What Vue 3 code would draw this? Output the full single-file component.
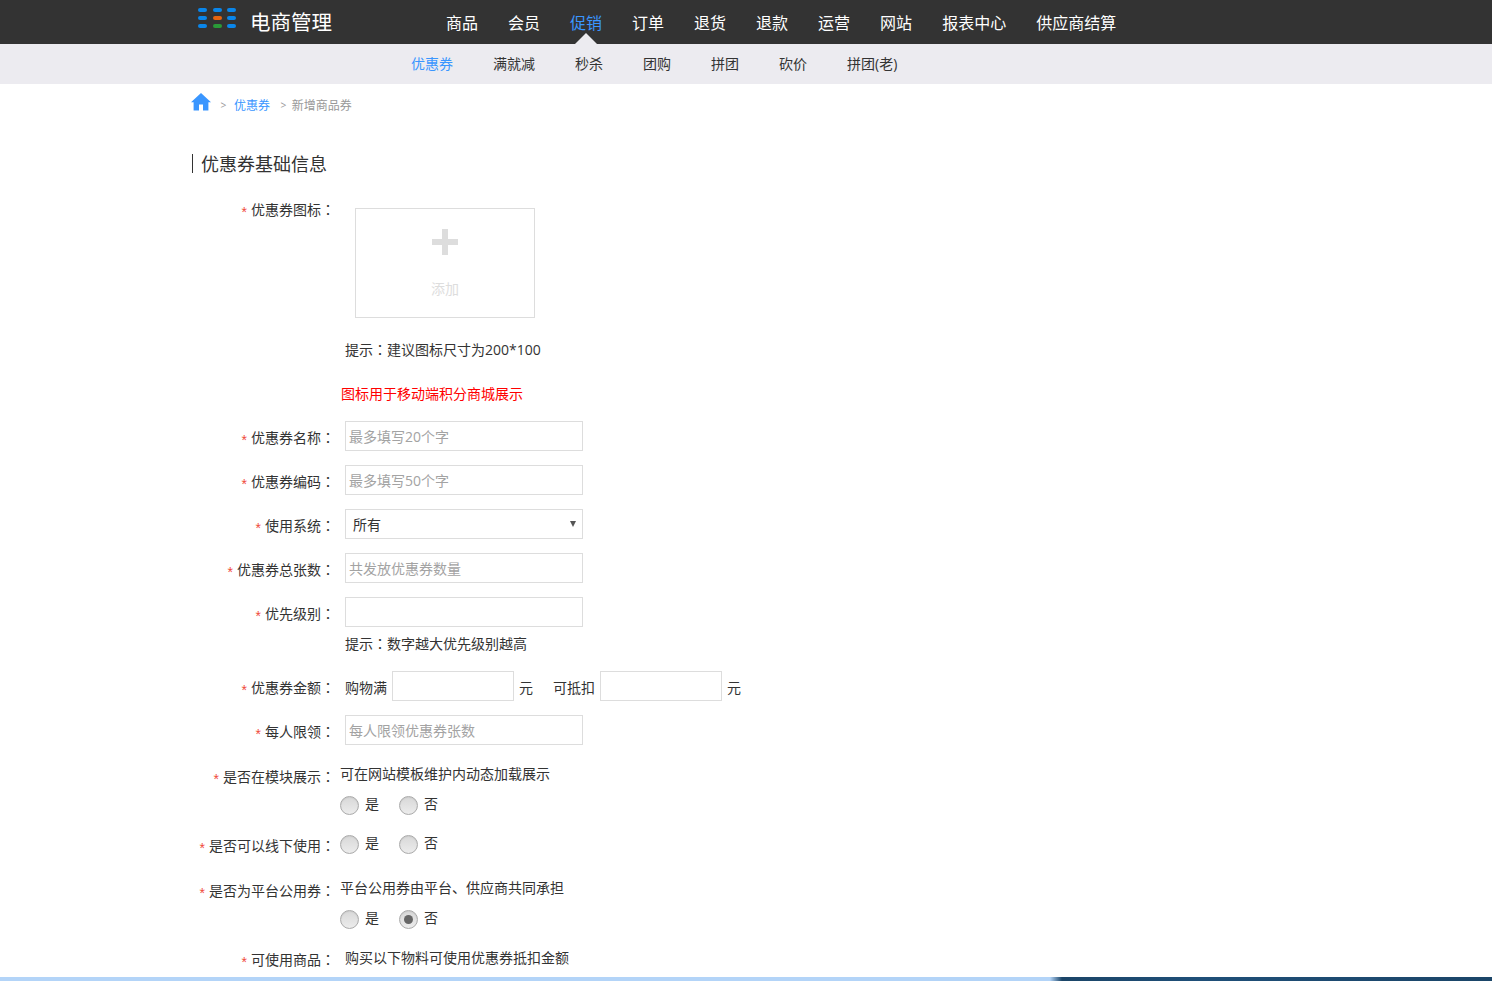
<template>
  <div class="page">
    <div class="top-bar">
      <div class="logo">
        <div class="logo-grid">
          <i v-for="(c, i) in logoCells" :key="i" :class="c"></i>
        </div>
        <span class="logo-text">电商管理</span>
      </div>
      <ul class="main-nav">
        <li v-for="item in mainNav" :key="item" :class="{ active: item === '促销' }">{{ item }}</li>
      </ul>
    </div>

    <ul class="sub-nav">
      <li v-for="item in subNav" :key="item" :class="{ active: item === '优惠券' }">{{ item }}</li>
    </ul>

    <div class="content">
      <div class="crumbs">
        <svg class="home" viewBox="0 0 20 18" width="20" height="18">
          <path d="M10 0 L20 9.2 L17.4 9.2 L17.4 17.5 L12 17.5 L12 11.5 L8 11.5 L8 17.5 L2.6 17.5 L2.6 9.2 L0 9.2 Z" fill="#3a96ff" />
        </svg>
        <span class="sep first">&gt;</span>
        <span class="link">优惠券</span>
        <span class="sep">&gt;</span>
        <span class="current">新增商品券</span>
      </div>

      <h2 class="title">优惠券基础信息</h2>

      <div class="row icon-row">
        <label class="label"><em>*</em>优惠券图标<span class="colon">：</span></label>
        <div class="upload">
          <span class="plus"></span>
          <span class="add">添加</span>
        </div>
      </div>
      <p class="size-hint">提示<span class="colon">：</span>建议图标尺寸为200*100</p>
      <p class="red-hint">图标用于移动端积分商城展示</p>

      <div class="row">
        <label class="label"><em>*</em>优惠券名称<span class="colon">：</span></label>
        <input class="field" placeholder="最多填写20个字" />
      </div>
      <div class="row">
        <label class="label"><em>*</em>优惠券编码<span class="colon">：</span></label>
        <input class="field" placeholder="最多填写50个字" />
      </div>
      <div class="row">
        <label class="label"><em>*</em>使用系统<span class="colon">：</span></label>
        <div class="field select">所有<span class="caret"></span></div>
      </div>
      <div class="row">
        <label class="label"><em>*</em>优惠券总张数<span class="colon">：</span></label>
        <input class="field" placeholder="共发放优惠券数量" />
      </div>
      <div class="row priority">
        <label class="label"><em>*</em>优先级别<span class="colon">：</span></label>
        <input class="field" />
      </div>
      <p class="priority-hint">提示<span class="colon">：</span>数字越大优先级别越高</p>
      <div class="row">
        <label class="label"><em>*</em>优惠券金额<span class="colon">：</span></label>
        <div class="amount">
          <span class="buy">购物满</span>
          <input class="field short" />
          <span class="yuan">元</span>
          <span class="deduct">可抵扣</span>
          <input class="field short" />
          <span class="yuan">元</span>
        </div>
      </div>
      <div class="row limit">
        <label class="label"><em>*</em>每人限领<span class="colon">：</span></label>
        <input class="field" placeholder="每人限领优惠券张数" />
      </div>

      <div class="row choice module">
        <label class="label"><em>*</em>是否在模块展示<span class="colon">：</span></label>
        <div class="choice-body">
          <p class="note">可在网站模板维护内动态加载展示</p>
          <div class="radios">
            <span class="radio"></span><span class="radio-text">是</span>
            <span class="radio"></span><span class="radio-text">否</span>
          </div>
        </div>
      </div>
      <div class="row choice offline">
        <label class="label"><em>*</em>是否可以线下使用<span class="colon">：</span></label>
        <div class="radios">
          <span class="radio"></span><span class="radio-text">是</span>
          <span class="radio"></span><span class="radio-text">否</span>
        </div>
      </div>
      <div class="row choice public">
        <label class="label"><em>*</em>是否为平台公用券<span class="colon">：</span></label>
        <div class="choice-body">
          <p class="note">平台公用券由平台、供应商共同承担</p>
          <div class="radios">
            <span class="radio"></span><span class="radio-text">是</span>
            <span class="radio checked"></span><span class="radio-text">否</span>
          </div>
        </div>
      </div>
      <div class="row goods">
        <label class="label"><em>*</em>可使用商品<span class="colon">：</span></label>
        <p class="note">购买以下物料可使用优惠券抵扣金额</p>
      </div>
    </div>

    <div class="bottom-bar"></div>
  </div>
</template>

<script setup>
const logoCells = ['', '', '', '', 'orange', '', '', 'green', '']
const mainNav = ['商品', '会员', '促销', '订单', '退货', '退款', '运营', '网站', '报表中心', '供应商结算']
const subNav = ['优惠券', '满就减', '秒杀', '团购', '拼团', '砍价', '拼团(老)']
</script>

<style>
html,
body {
  margin: 0;
  background: #fff;
}
</style>

<style scoped>
.page {
  height: 981px;
  display: flex;
  flex-direction: column;
  overflow: hidden;
  font-family: "Open Sans", "Noto Sans CJK SC", sans-serif;
  font-size: 14px;
  color: #333;
}

/* the SC font pushes full-width colons to the left, TC centres them */
.colon {
  font-family: "Noto Sans CJK TC", sans-serif;
}

.top-bar {
  height: 44px;
  flex: none;
  background: #333;
  display: flex;
}

.logo {
  width: 446px;
  flex: none;
  display: flex;
  align-items: flex-start;
  box-sizing: border-box;
  padding: 8px 0 0 198px;
}

.logo-grid {
  display: grid;
  grid-template-columns: repeat(3, 9px);
  grid-auto-rows: 4px;
  gap: 4px 5.5px;
}

.logo-grid i {
  background: #0a86ea;
  border-radius: 2px;
}

.logo-grid .orange {
  background: #e8640f;
}

.logo-grid .green {
  background: #2a9a38;
}

.logo-text {
  margin: -1px 0 0 14px;
  font-size: 20.5px;
  line-height: 30px;
  color: #fff;
}

.main-nav,
.sub-nav {
  list-style: none;
  margin: 0;
  padding: 0;
  display: flex;
}

.main-nav {
  gap: 30px;
}

.main-nav li {
  position: relative;
  height: 44px;
  font-size: 16px;
  line-height: 46px;
  color: #fff;
}

.main-nav li.active {
  color: #3a96ff;
}

.main-nav li.active::after {
  content: "";
  position: absolute;
  left: 50%;
  bottom: 0;
  margin-left: -11px;
  border: 11px solid transparent;
  border-top: 0;
  border-bottom-color: #ecebf0;
}

.sub-nav {
  height: 40px;
  flex: none;
  background: #ecebf0;
  gap: 40px;
  padding-left: 411px;
}

.sub-nav li {
  line-height: 40px;
  color: #333;
}

.sub-nav li.active {
  color: #3a96ff;
}

.content {
  flex: 1;
  min-height: 0;
  padding-left: 191px;
}

.crumbs {
  height: 18px;
  margin-top: 9px;
  display: flex;
  align-items: flex-start;
  font-size: 12px;
  line-height: 17px;
  color: #999;
}

.crumbs span {
  padding-top: 4px;
}

.sep {
  margin: 0 5px 0 10px;
  transform: scale(0.85);
}

.sep.first {
  margin-left: 9px;
  margin-right: 7px;
}

.link {
  color: #3a96ff;
}

.title {
  margin: 0;
  margin-top: 39px;
  padding-left: 10px;
  height: 27px;
  line-height: 29px;
  font-size: 18px;
  font-weight: 400;
  color: #333;
  position: relative;
}

.title::before {
  content: "";
  position: absolute;
  left: 1px;
  top: 4px;
  width: 1px;
  height: 19px;
  background: #333;
}

.row {
  display: flex;
  align-items: flex-start;
  margin-bottom: 14px;
}

.label {
  width: 144px;
  margin-right: 10px;
  flex: none;
  text-align: right;
  line-height: 20px;
  padding-top: 6px;
  height: 24px;
  white-space: nowrap;
}

.label em {
  font-family: "Liberation Sans", sans-serif;
  font-style: normal;
  color: #f04a3a;
  margin-right: 4px;
  font-size: 14px;
  vertical-align: -2px;
}

.icon-row {
  margin: 31px 0 0;
}

.icon-row .label {
  padding-top: 0;
  margin-top: -9px;
}

.upload {
  width: 178px;
  height: 108px;
  margin-left: 10px;
  border: 1px solid #ddd;
  display: flex;
  flex-direction: column;
  align-items: center;
}

.plus {
  display: block;
  width: 26px;
  height: 26px;
  margin-top: 20px;
  background:
    linear-gradient(#ddd, #ddd) center / 26px 6px no-repeat,
    linear-gradient(#ddd, #ddd) center / 6px 26px no-repeat;
}

.add {
  margin-top: 24px;
  line-height: 20px;
  color: #ddd;
}

.size-hint {
  margin: 21px 0 0 154px;
  line-height: 20px;
  color: #333;
}

.red-hint {
  margin: 24px 0 17px 150px;
  line-height: 20px;
  color: #f00;
}

.field {
  box-sizing: border-box;
  display: block;
  width: 238px;
  height: 30px;
  margin: 0;
  padding: 0 3px;
  border: 1px solid #ddd;
  background: #fff;
  outline: none;
  font: inherit;
  font-size: 14px;
  color: #333;
}

.field::placeholder {
  color: #a3a3a3;
  opacity: 1;
}

.select {
  position: relative;
  line-height: 30px;
  padding-left: 7px;
}

.caret {
  position: absolute;
  right: 6px;
  top: 11px;
  border: 3.5px solid transparent;
  border-top: 6px solid #555;
  border-bottom: 0;
}

.priority {
  margin-bottom: 6px;
}

.priority-hint {
  margin: 0 0 17px 154px;
  line-height: 20px;
}

.amount {
  display: flex;
  align-items: center;
  height: 30px;
}

.amount .buy,
.amount .deduct,
.amount .yuan {
  padding-top: 1px;
}

.short {
  width: 122px;
}

.buy {
  margin-right: 5px;
}

.yuan {
  margin-left: 5px;
}

.deduct {
  margin: 0 5px 0 20px;
}

.limit {
  margin-bottom: 19px;
}

.choice .label {
  padding-top: 2px;
}

.choice-body {
  margin-left: -5px;
}

.note {
  margin: 0;
  line-height: 20px;
}

.radios {
  display: flex;
  align-items: center;
  margin-top: 11px;
  height: 20px;
}

.radio {
  box-sizing: border-box;
  width: 19px;
  height: 19px;
  border: 1px solid #aaa;
  border-radius: 50%;
  background: linear-gradient(#d8d8d8, #ececec);
  box-shadow: inset 0 1px 1px #ccc;
  display: flex;
  align-items: center;
  justify-content: center;
}

.radio.checked::after {
  content: "";
  width: 9px;
  height: 9px;
  border-radius: 50%;
  background: #666;
}

.radio-text {
  margin: 0 20px 0 6px;
  line-height: 20px;
  margin-top: -2px;
}

.module {
  margin-bottom: 19px;
}

.offline {
  margin-bottom: 19px;
}

.offline .radios {
  margin: 0 0 0 -5px;
}

.choice.offline .label {
  padding-top: 1px;
}

.public {
  margin-bottom: 19px;
}

.goods .label {
  padding-top: 1px;
}

.bottom-bar {
  height: 4px;
  flex: none;
  background: linear-gradient(90deg, #b3d4f8 0, #b3d4f8 1050px, #1b4568 1062px, #1f4f78 1200px, #1b4568 1492px);
}
</style>
